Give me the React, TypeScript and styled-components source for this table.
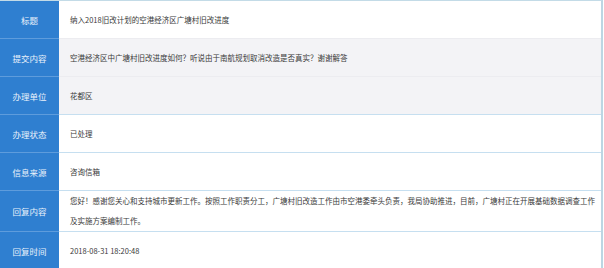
import { Fragment } from 'react'
import styled, { createGlobalStyle } from 'styled-components'

type DetailRow = {
  label: string
  value: string
  tone: 'white' | 'grey'
  rule: 'grey' | 'blue'
}

const rows: DetailRow[] = [
  { label: '标题', value: '纳入2018旧改计划的空港经济区广塘村旧改进度', tone: 'white', rule: 'grey' },
  {
    label: '提交内容',
    value: '空港经济区中广塘村旧改进度如何？听说由于南航规划取消改造是否真实？谢谢解答',
    tone: 'grey',
    rule: 'grey',
  },
  { label: '办理单位', value: '花都区', tone: 'grey', rule: 'blue' },
  { label: '办理状态', value: '已处理', tone: 'white', rule: 'blue' },
  { label: '信息来源', value: '咨询信箱', tone: 'white', rule: 'blue' },
  {
    label: '回复内容',
    value:
      '您好！感谢您关心和支持城市更新工作。按照工作职责分工，广塘村旧改造工作由市空港委牵头负责，我局协助推进，目前，广塘村正在开展基础数据调查工作及实施方案编制工作。',
    tone: 'white',
    rule: 'blue',
  },
  { label: '回复时间', value: '2018-08-31 18:20:48', tone: 'white', rule: 'blue' },
]

const GlobalStyle = createGlobalStyle`
  body {
    margin: 0;
    background: #ffffff;
    font-family: "Noto Sans CJK SC", "Noto Sans", sans-serif;
  }
`

const Table = styled.div`
  display: grid;
  grid-template-columns: 59px 1fr;
  width: 601px;
  border-top: 1px solid #c3dbe7;
  border-right: 2px solid #bcd6e3;
  border-bottom: 2px solid #c3dbe7;
`

const Label = styled.div<{ $last: boolean }>`
  display: flex;
  align-items: center;
  justify-content: center;
  min-height: 37px;
  background: #2f7fd0;
  color: #eaf2fb;
  font-size: 8.5px;
  border-bottom: ${(p) => (p.$last ? 'none' : '1px solid #5e9cdc')};
`

const Value = styled.div<{ $tone: 'white' | 'grey'; $rule: 'grey' | 'blue'; $last: boolean }>`
  display: flex;
  align-items: center;
  padding: 0 2px 0 11px;
  min-height: 37px;
  background: ${(p) => (p.$tone === 'grey' ? '#f3f3f6' : '#ffffff')};
  color: #3a3a3a;
  font-size: 7.5px;
  line-height: 20px;
  border-bottom: ${(p) =>
    p.$last ? 'none' : p.$rule === 'blue' ? '1px solid #c6dff0' : '1px solid #ececf0'};
`

export default function App() {
  return (
    <>
      <GlobalStyle />
      <Table>
        {rows.map((row, index) => {
          const last = index === rows.length - 1
          return (
            <Fragment key={row.label}>
              <Label $last={last}>{row.label}</Label>
              <Value $tone={row.tone} $rule={row.rule} $last={last}>
                {row.value}
              </Value>
            </Fragment>
          )
        })}
      </Table>
    </>
  )
}
